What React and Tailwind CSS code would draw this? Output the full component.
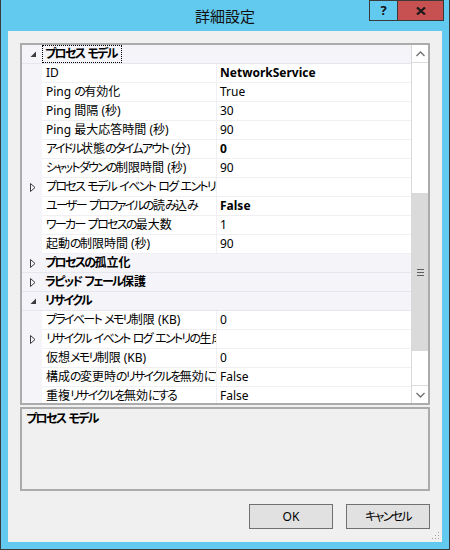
import React from 'react';

const rows = [
  { cat: true, label: 'プロセス モデル', open: true, focus: true },
  { name: 'ID', value: 'NetworkService', bold: true },
  { name: 'Ping の有効化', value: 'True' },
  { name: 'Ping 間隔 (秒)', value: '30' },
  { name: 'Ping 最大応答時間 (秒)', value: '90' },
  { name: 'アイドル状態のタイムアウト (分)', value: '0', bold: true },
  { name: 'シャットダウンの制限時間 (秒)', value: '90' },
  { name: 'プロセス モデル イベント ログ エントリ', value: '', expand: true },
  { name: 'ユーザー プロファイルの読み込み', value: 'False', bold: true },
  { name: 'ワーカー プロセスの最大数', value: '1' },
  { name: '起動の制限時間 (秒)', value: '90' },
  { cat: true, label: 'プロセスの孤立化' },
  { cat: true, label: 'ラピッド フェール保護' },
  { cat: true, label: 'リサイクル', open: true },
  { name: 'プライベート メモリ制限 (KB)', value: '0' },
  { name: 'リサイクル イベント ログ エントリの生成', value: '', expand: true },
  { name: '仮想メモリ制限 (KB)', value: '0' },
  { name: '構成の変更時のリサイクルを無効にする', value: 'False' },
  { name: '重複リサイクルを無効にする', value: 'False' },
];

// Meiryo UI has narrow kana; tighten kana runs so Noto matches its widths
function J({ text }) {
  const parts = text.split(/([\u3040-\u30FF]+)/);
  return (
    <>
      {parts.map((p, i) =>
        /[\u3040-\u30FF]/.test(p) ? (
          <span key={i} className="tracking-[-1.7px]">
            {p}
          </span>
        ) : (
          <React.Fragment key={i}>{p}</React.Fragment>
        )
      )}
    </>
  );
}

function Expanded() {
  return (
    <svg width="7" height="7" viewBox="0 0 7 7" className="block">
      <polygon points="6,0.5 6,6 0.5,6" fill="#3c3c3c" />
    </svg>
  );
}

function Collapsed() {
  return (
    <svg width="6" height="9" viewBox="0 0 6 9" className="block">
      <polygon points="0.5,0.5 5,4.5 0.5,8.5" fill="none" stroke="#3c3c3c" strokeWidth="1" />
    </svg>
  );
}

function Chevron({ down }) {
  return (
    <svg width="9" height="6" viewBox="0 0 9 6" className="block">
      <polyline
        points={down ? '0.5,1 4.5,5 8.5,1' : '0.5,5 4.5,1 8.5,5'}
        fill="none"
        stroke="#707070"
        strokeWidth="1.3"
      />
    </svg>
  );
}

function GridRow({ row }) {
  if (row.cat) {
    return (
      <div className="flex h-[19px] shrink-0 items-center bg-[#f5f5f9] border-b border-[#e6e6ee]">
        <div className="w-[20px] flex justify-center pl-[2px]">
          {row.open ? <Expanded /> : <Collapsed />}
        </div>
        <div
          className={`h-full flex items-center pl-[3px] pr-[5px] font-bold ${
            row.focus ? 'outline outline-1 outline-dotted outline-black -outline-offset-1' : ''
          }`}
        >
          <span>
            <J text={row.label} />
          </span>
        </div>
      </div>
    );
  }
  return (
    <div className="flex h-[19px] shrink-0 bg-[#f5f5f9]">
      <div className="w-[20px] flex items-center justify-center pl-[2px]">
        {row.expand && <Collapsed />}
      </div>
      <div className="w-[175px] bg-white border-r border-b border-[#f0f0f4] pl-[4px] flex items-center overflow-hidden whitespace-nowrap">
        <span>
          <J text={row.name} />
        </span>
      </div>
      <div
        className={`flex-1 bg-white border-b border-[#f0f0f4] pl-[3px] flex items-center whitespace-nowrap ${
          row.bold ? 'font-bold' : ''
        }`}
      >
        {row.value}
      </div>
    </div>
  );
}

export default function App() {
  return (
    <div className="w-[450px] h-[550px] bg-[#62c9ef] border-x border-b border-[#3a3a3a] flex flex-col text-[12px] text-black font-['Noto_Sans','Noto_Sans_CJK_JP',sans-serif] [font-feature-settings:'palt']">
      {/* Title bar */}
      <div className="relative h-[31px] shrink-0 flex items-center justify-center">
        <span className="text-[15px] text-[#111] pt-[1px]">詳細設定</span>
        <div className="absolute top-0 right-[5px] flex">
          <div className="w-[29px] h-[21px] border border-[#3a3a3a] flex items-center justify-center font-bold text-[13px] text-[#111]">
            ?
          </div>
          <div className="w-[47px] h-[21px] -ml-px border border-[#3a3a3a] bg-[#c75050] flex items-center justify-center">
            <svg width="10" height="8" viewBox="0 0 10 8">
              <path d="M1 0.5 L9 7.5 M9 0.5 L1 7.5" stroke="#1a1a1a" strokeWidth="2.2" />
            </svg>
          </div>
        </div>
      </div>

      {/* Client area */}
      <div className="relative mx-[7px] h-[511px] shrink-0 bg-[#f0f0f0] px-[12px] pt-[12px] flex flex-col">
        {/* Property grid */}
        <div className="h-[362px] shrink-0 border-2 border-[#ababab] bg-white flex overflow-hidden">
          <div className="flex-1 flex flex-col overflow-hidden">
            {rows.map((row, i) => (
              <GridRow key={i} row={row} />
            ))}
          </div>
          <div className="w-[17px] shrink-0 border-l border-[#d9d9d9] bg-white flex flex-col">
            <div className="h-[18px] shrink-0 border-b border-[#dcdcdc] flex items-center justify-center">
              <Chevron />
            </div>
            <div className="h-[130px] shrink-0" />
            <div className="h-[158px] shrink-0 bg-[#dadada] flex flex-col items-center justify-center gap-[2px]">
              <div className="w-[7px] h-px bg-[#606060]" />
              <div className="w-[7px] h-px bg-[#606060]" />
              <div className="w-[7px] h-px bg-[#606060]" />
            </div>
            <div className="flex-1" />
            <div className="h-[18px] shrink-0 border-t border-[#dcdcdc] flex items-center justify-center">
              <Chevron down />
            </div>
          </div>
        </div>

        {/* Description */}
        <div className="mt-[2px] h-[84px] shrink-0 border-2 border-[#ababab] bg-[#f0f0f0] pl-[4px] leading-[19px] font-bold">
          <J text="プロセス モデル" />
        </div>

        {/* Buttons */}
        <div className="mt-[13px] flex justify-end gap-[13px]">
          <button className="w-[84px] h-[25px] bg-[#e1e1e1] border border-[#707070] text-[12px] flex items-center justify-center">
            OK
          </button>
          <button className="w-[84px] h-[25px] bg-[#e1e1e1] border border-[#707070] text-[12px] flex items-center justify-center">
            <J text="キャンセル" />
          </button>
        </div>

        {/* Size grip */}
        <svg className="absolute right-[2px] bottom-[2px]" width="8" height="8" viewBox="0 0 8 8">
          <rect x="6" y="0" width="1" height="1" fill="#a0a0a0" />
          <rect x="3" y="3" width="1" height="1" fill="#a0a0a0" />
          <rect x="6" y="3" width="1" height="1" fill="#a0a0a0" />
          <rect x="0" y="6" width="1" height="1" fill="#a0a0a0" />
          <rect x="3" y="6" width="1" height="1" fill="#a0a0a0" />
          <rect x="6" y="6" width="1" height="1" fill="#a0a0a0" />
        </svg>
      </div>
    </div>
  );
}
